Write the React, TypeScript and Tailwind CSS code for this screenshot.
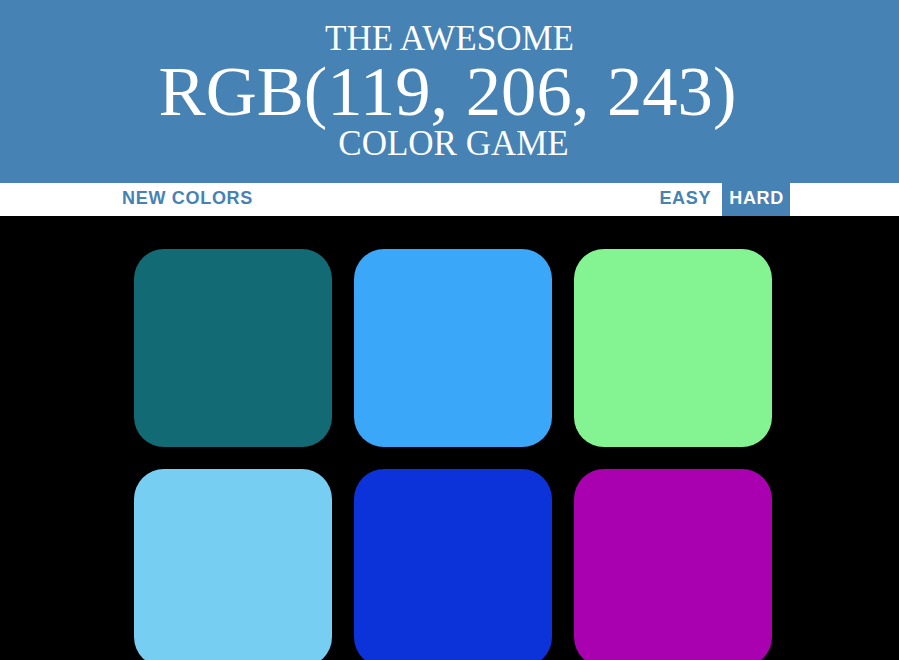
import React from "react";

const SQUARES = [
  "#126b74",
  "#3aa7f8",
  "#84f492",
  "#77cef3",
  "#0c32d9",
  "#a900b0",
];

export default function App() {
  return (
    <div className="min-h-screen bg-black">
      {/* Header */}
      <h1 className="bg-[#4682b4] pt-[21px] pb-[22px] text-center font-normal uppercase text-white font-['Liberation_Serif',serif]">
        <div className="text-[35px] leading-[35px]">The Awesome</div>
        <div className="pr-[4px] text-[70.6px] leading-[70px]">RGB(119, 206, 243)</div>
        <div className="pl-[8px] text-[35px] leading-[35px]">Color Game</div>
      </h1>

      {/* Stripe */}
      <div className="bg-white h-[33px]">
        <div className="ml-[116px] w-[674px] h-full flex justify-between font-['Liberation_Sans',Arial,sans-serif] text-[18px] font-bold uppercase tracking-[0.7px]">
          <button className="h-full px-[6px] pt-[4px] leading-[22px] flex items-start text-[#4682b4] uppercase">
            New Colors
          </button>
          <div className="flex h-full gap-[5px]">
            <button className="h-full px-[6px] pt-[4px] leading-[22px] flex items-start text-[#4682b4] uppercase">
              Easy
            </button>
            <button className="h-full pl-[7px] pr-[6px] pt-[4px] leading-[22px] flex items-start bg-[#4682b4] text-white uppercase">
              Hard
            </button>
          </div>
        </div>
      </div>

      {/* Squares */}
      <div className="ml-[134px] w-[638px] pt-[33px] grid grid-cols-3 gap-[22px]">
        {SQUARES.map((c) => (
          <div
            key={c}
            className="h-[198px] rounded-[30px]"
            style={{ backgroundColor: c }}
          />
        ))}
      </div>
    </div>
  );
}
